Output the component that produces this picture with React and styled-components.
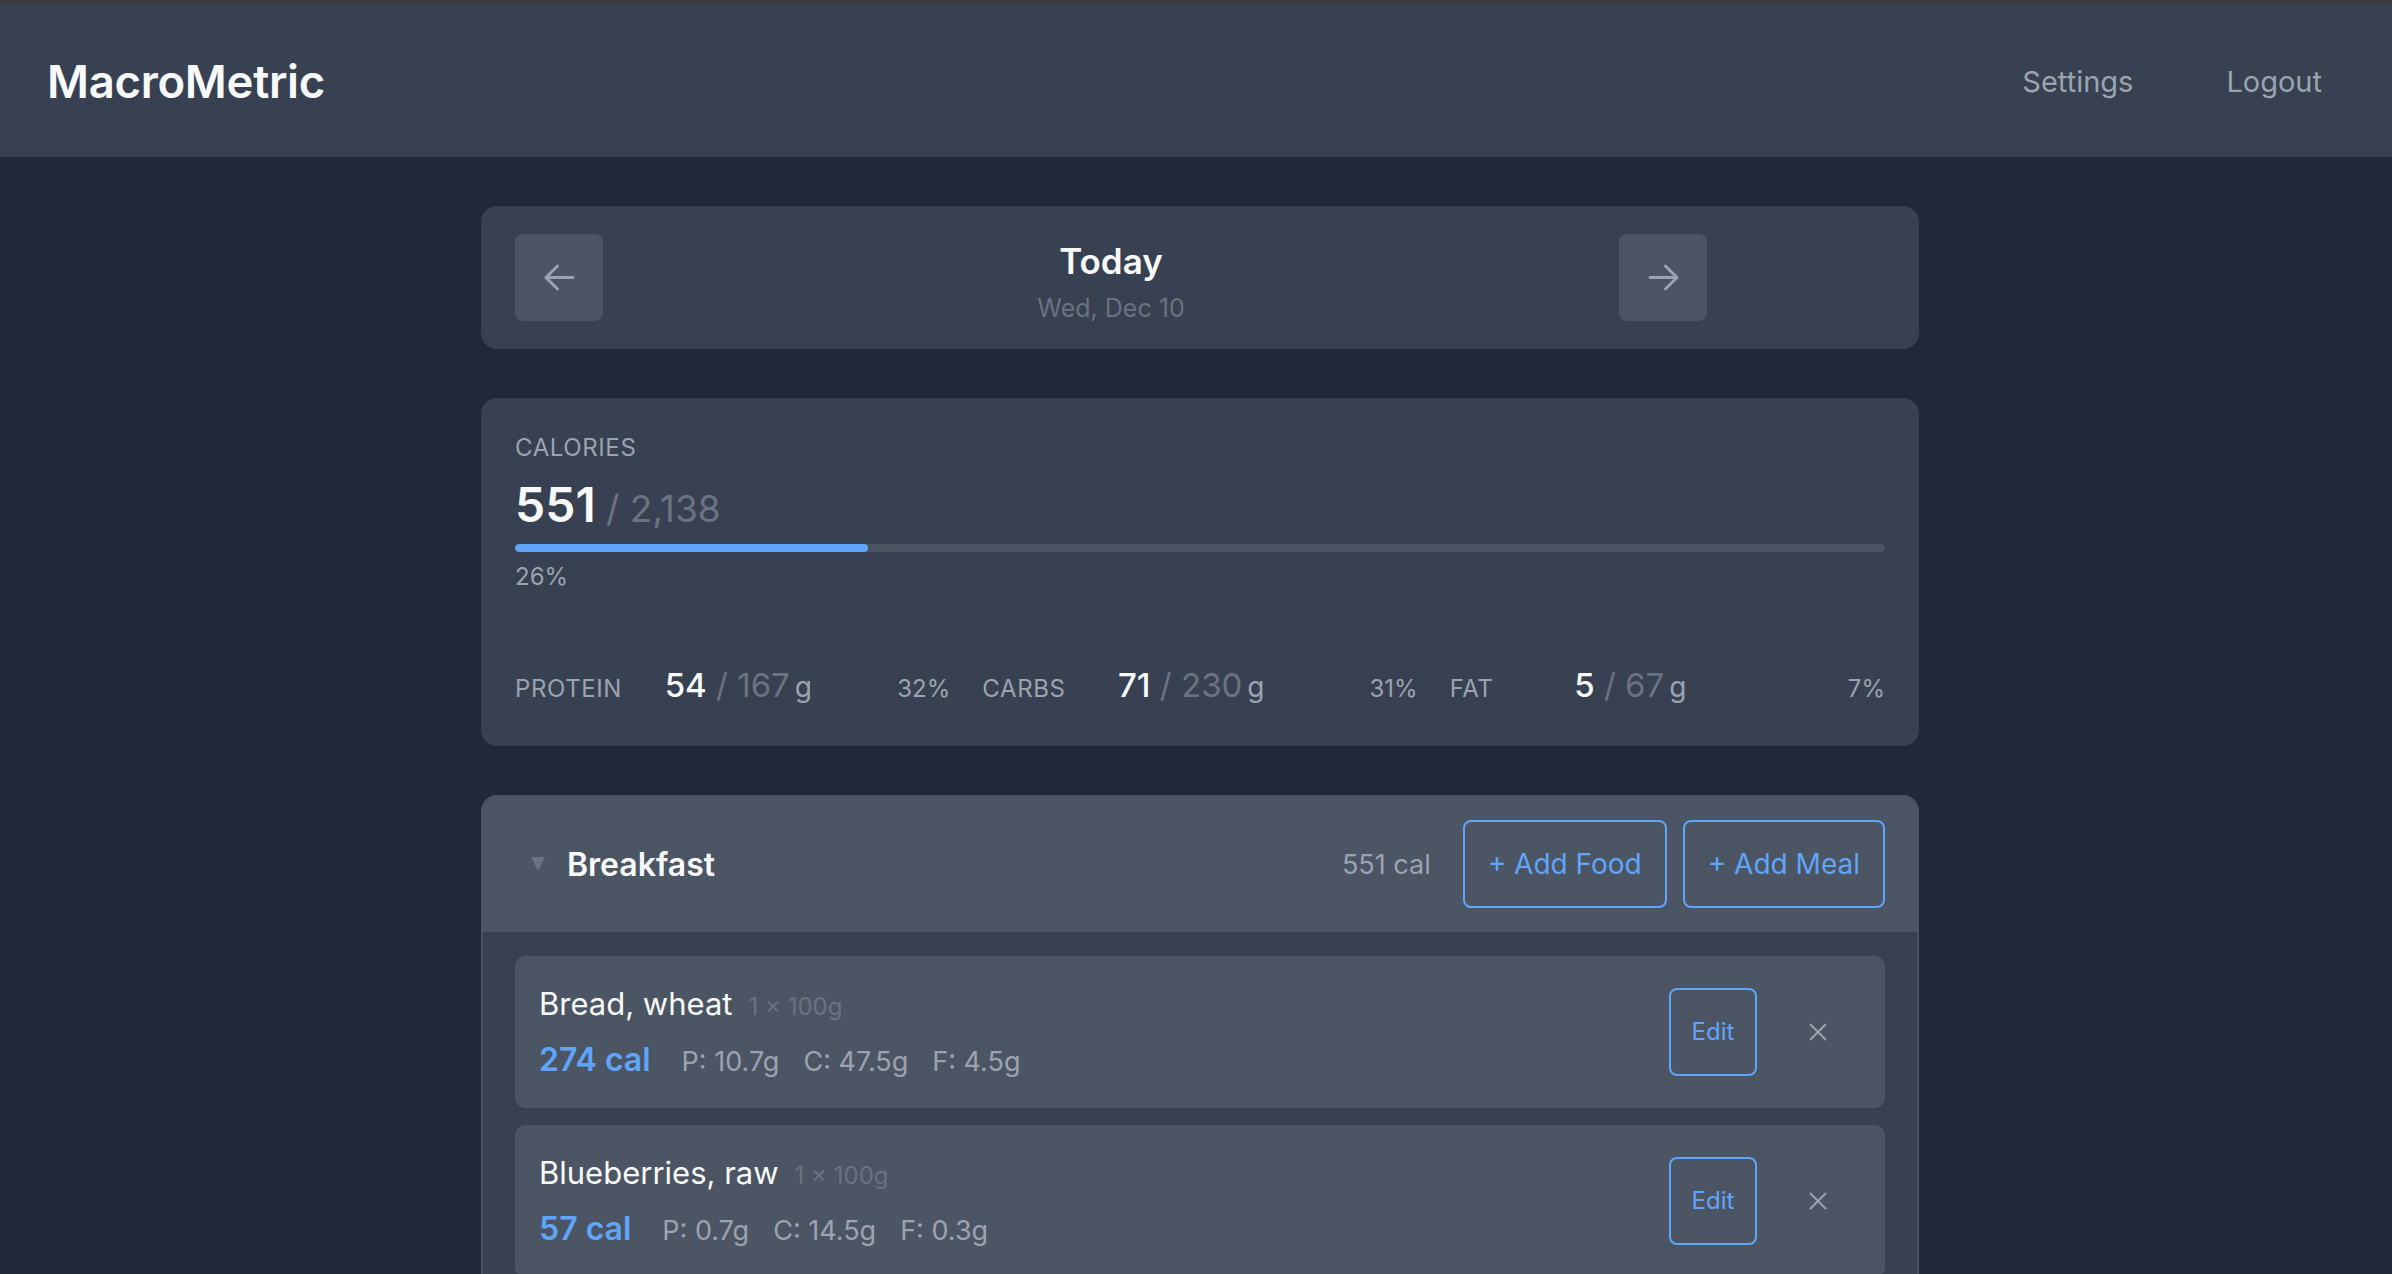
import React from 'react';
import styled, { createGlobalStyle } from 'styled-components';
import { X } from 'lucide-react';

const colors = {
    page: '#1f2937',
    panel: '#374151',
    raised: '#4b5563',
    text: '#f9fafb',
    muted: '#9ca3af',
    faint: '#6b7280',
    blue: '#60a5fa',
};

const GlobalStyle = createGlobalStyle`
    * { box-sizing: border-box; }
    body {
        margin: 0;
        background: ${colors.page};
        font-family: Inter, 'Noto Sans', 'Liberation Sans', sans-serif;
        color: ${colors.text};
    }
    button { font-family: inherit; }
`

const Page = styled.div`
    min-height: 100vh;
    background: ${colors.page};
`

const TopBar = styled.header`
    height: 157px;
    border-top: 5px solid #3b3b3d;
    background: ${colors.panel};
    display: flex;
    align-items: center;
    justify-content: space-between;
    padding: 0 46px 0 47px;
`

const Logo = styled.div`
    font-size: 45.5px;
    font-weight: 600;
    letter-spacing: -0.3px;
    color: ${colors.text};
`

const Nav = styled.nav`
    display: flex;
    gap: 45px;
`

const NavLink = styled.a`
    padding: 0 24px;
    font-size: 29px;
    color: ${colors.muted};
    text-decoration: none;
    cursor: pointer;
`

const MainWrap = styled.div`
    padding-left: 8px;
`

const Main = styled.main`
    width: 1438px;
    margin: 0 auto;
    padding-top: 49px;
    display: flex;
    flex-direction: column;
    gap: 49px;
`

const Card = styled.section`
    background: ${colors.panel};
    border-radius: 16px;
`

const DateCard = styled(Card)`
    display: flex;
    align-items: center;
    padding: 28px 34px;
`

const ArrowButton = styled.button`
    width: 88px;
    height: 87px;
    border: 0;
    border-radius: 8px;
    background: ${colors.raised};
    color: ${colors.muted};
    display: flex;
    align-items: center;
    justify-content: center;
    cursor: pointer;
`

const DateCenter = styled.div`
    flex: 1;
    height: 87px;
    display: flex;
    flex-direction: column;
    align-items: center;
    padding-top: 6px;
`

const DateTitle = styled.div`
    font-size: 35px;
    font-weight: 600;
    line-height: 42px;
    color: ${colors.text};
`

const DateSub = styled.div`
    font-size: 25px;
    line-height: 34px;
    margin-top: 9px;
    color: ${colors.faint};
`

const Spacer = styled.div`
    width: 178px;
`

const SummaryCard = styled(Card)`
    padding: 32px 34px 37px;
`

const Label = styled.div`
    font-size: 24px;
    line-height: 36px;
    letter-spacing: 0.6px;
    text-transform: uppercase;
    color: ${colors.muted};
`

const BigNumber = styled.div`
    margin-top: 11px;
    height: 56px;
    font-size: 48px;
    line-height: 56px;
    white-space: nowrap;

    strong {
        font-size: 48px;
        line-height: 1;
        font-weight: 600;
        color: ${colors.text};
    }
    span {
        font-size: 37px;
        line-height: 1;
        color: ${colors.faint};
    }
`

const Track = styled.div`
    margin-top: 11px;
    height: 8px;
    border-radius: 4px;
    background: ${colors.raised};
    overflow: hidden;
`

const Fill = styled.div`
    height: 100%;
    border-radius: 4px;
    background: ${colors.blue};
`

const Percent = styled.div`
    margin-top: 9px;
    font-size: 24px;
    line-height: 32px;
    color: ${colors.muted};
`

const MacroGrid = styled.div`
    margin-top: 68px;
    display: grid;
    grid-template-columns: repeat(3, 1fr);
    gap: 32px;
`

const Macro = styled.div`
    display: flex;
    align-items: baseline;
    justify-content: space-between;
    height: 48px;
    line-height: 48px;
    white-space: nowrap;
`

const MacroValue = styled.div`
    font-size: 33px;
    line-height: 48px;

    strong {
        font-size: 33px;
        line-height: 1;
        font-weight: 500;
        color: ${colors.text};
    }
    span {
        font-size: 33px;
        line-height: 1;
        color: ${colors.faint};
    }
    small {
        font-size: 28px;
        line-height: 1;
        margin-left: 5px;
        color: ${colors.muted};
    }
`

const MacroPct = styled.div`
    font-size: 24px;
    color: ${colors.muted};
`

const MealCard = styled.section`
    border: 2px solid ${colors.raised};
    border-radius: 16px;
    background: ${colors.panel};
    overflow: hidden;
`

const MealHeader = styled.div`
    display: flex;
    align-items: center;
    background: ${colors.raised};
    padding: 23px 32px 24px 48px;
`

const Toggle = styled.span`
    width: 0;
    height: 0;
    border-left: 7px solid transparent;
    border-right: 7px solid transparent;
    border-top: 14px solid ${colors.faint};
    margin-right: 22px;
`

const MealTitle = styled.div`
    flex: 1;
    font-size: 32px;
    font-weight: 600;
    color: ${colors.text};
`

const MealCal = styled.div`
    font-size: 27px;
    color: ${colors.muted};
    margin-right: 32px;
`

const OutlineButton = styled.button`
    border: 2px solid ${colors.blue};
    border-radius: 8px;
    background: transparent;
    color: ${colors.blue};
    font-size: ${(p) => p.$small ? '24px' : '28px'};
    line-height: 40px;
    padding: ${(p) => p.$small ? '22px 0' : '22px 23px'};
    width: ${(p) => p.$small ? '88px' : 'auto'};
    cursor: pointer;
    & + & { margin-left: 16px; }
`

const MealBody = styled.div`
    padding: 24px 32px;
    display: flex;
    flex-direction: column;
    gap: 17px;
`

const FoodItem = styled.div`
    display: flex;
    align-items: center;
    justify-content: space-between;
    background: ${colors.raised};
    border-radius: 10px;
    padding: 26px 39px 26px 24px;
`

const FoodInfo = styled.div`
    display: flex;
    flex-direction: column;
    gap: 12px;
`

const FoodLine = styled.div`
    height: 44px;
    font-size: 31px;
    line-height: 44px;
    white-space: nowrap;

    & > span { line-height: 1; }
`

const FoodName = styled.span`
    font-size: 31px;
    color: ${colors.text};
`

const Serving = styled.span`
    font-size: 24px;
    color: ${colors.faint};
    margin-left: 16px;
`

const FoodCal = styled.span`
    font-size: 32px;
    font-weight: 600;
    color: ${colors.blue};
    margin-right: 31px;
`

const FoodMacro = styled.span`
    font-size: 27px;
    color: ${colors.muted};
    & + & { margin-left: 24px; }
`

const Actions = styled.div`
    display: flex;
    align-items: center;
    gap: 33px;
`

const CloseButton = styled.button`
    width: 56px;
    height: 56px;
    border: 0;
    background: transparent;
    color: ${colors.muted};
    display: flex;
    align-items: center;
    justify-content: center;
    cursor: pointer;
`

function Arrow({ flip }) {
    return (
        <svg width="31" height="27" viewBox="0 0 31 27" fill="none"
            style={flip ? { transform: 'scaleX(-1)' } : undefined}>
            <path d="M29 13.5H2M13.5 2L2 13.5L13.5 25" stroke="currentColor"
                strokeWidth="3" strokeLinecap="round" strokeLinejoin="round" />
        </svg>
    );
}

const macros = [
    { label: 'Protein', value: 54, goal: 167, pct: 32 },
    { label: 'Carbs', value: 71, goal: 230, pct: 31 },
    { label: 'Fat', value: 5, goal: 67, pct: 7 },
];

const foods = [
    { name: 'Bread, wheat', cal: 274, p: '10.7', c: '47.5', f: '4.5' },
    { name: 'Blueberries, raw', cal: 57, p: '0.7', c: '14.5', f: '0.3' },
];

export default function App() {
    const eaten = 551;
    const goal = 2138;

    return (
        <Page>
            <GlobalStyle />
            <TopBar>
                <Logo>MacroMetric</Logo>
                <Nav>
                    <NavLink>Settings</NavLink>
                    <NavLink>Logout</NavLink>
                </Nav>
            </TopBar>

            <MainWrap>
                <Main>
                    <DateCard>
                        <ArrowButton aria-label="previous day"><Arrow /></ArrowButton>
                        <DateCenter>
                            <DateTitle>Today</DateTitle>
                            <DateSub>Wed, Dec 10</DateSub>
                        </DateCenter>
                        <ArrowButton aria-label="next day"><Arrow flip /></ArrowButton>
                        <Spacer />
                    </DateCard>

                    <SummaryCard>
                        <Label>Calories</Label>
                        <BigNumber>
                            <strong>{eaten}</strong>
                            <span> / {goal.toLocaleString('en-US')}</span>
                        </BigNumber>
                        <Track>
                            <Fill style={{ width: `${(eaten / goal) * 100}%` }} />
                        </Track>
                        <Percent>{Math.round((eaten / goal) * 100)}%</Percent>

                        <MacroGrid>
                            {macros.map((m) => (
                                <Macro key={m.label}>
                                    <Label>{m.label}</Label>
                                    <MacroValue>
                                        <strong>{m.value}</strong>
                                        <span> / {m.goal}</span>
                                        <small>g</small>
                                    </MacroValue>
                                    <span />
                                    <MacroPct>{m.pct}%</MacroPct>
                                </Macro>
                            ))}
                        </MacroGrid>
                    </SummaryCard>

                    <MealCard>
                        <MealHeader>
                            <Toggle />
                            <MealTitle>Breakfast</MealTitle>
                            <MealCal>551 cal</MealCal>
                            <OutlineButton>+ Add Food</OutlineButton>
                            <OutlineButton>+ Add Meal</OutlineButton>
                        </MealHeader>
                        <MealBody>
                            {foods.map((f) => (
                                <FoodItem key={f.name}>
                                    <FoodInfo>
                                        <FoodLine>
                                            <FoodName>{f.name}</FoodName>
                                            <Serving>1 × 100g</Serving>
                                        </FoodLine>
                                        <FoodLine>
                                            <FoodCal>{f.cal} cal</FoodCal>
                                            <FoodMacro>P: {f.p}g</FoodMacro>
                                            <FoodMacro>C: {f.c}g</FoodMacro>
                                            <FoodMacro>F: {f.f}g</FoodMacro>
                                        </FoodLine>
                                    </FoodInfo>
                                    <Actions>
                                        <OutlineButton $small>Edit</OutlineButton>
                                        <CloseButton aria-label="remove"><X size={30} strokeWidth={1.6} /></CloseButton>
                                    </Actions>
                                </FoodItem>
                            ))}
                        </MealBody>
                    </MealCard>
                </Main>
            </MainWrap>
        </Page>
    );
}
